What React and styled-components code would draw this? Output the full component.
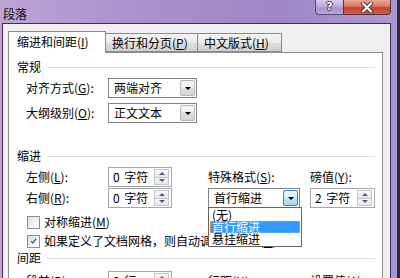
import React from 'react';
import styled, { createGlobalStyle } from 'styled-components';

const Global = createGlobalStyle`
  html, body { margin: 0; padding: 0; width: 400px; height: 278px; overflow: hidden; background: #2b2c3e; }
  body { font-family: "Noto Sans CJK SC", "Liberation Sans", sans-serif; font-size: 12px; color: #000; }
  #root { width: 400px; height: 278px; }
  u { text-decoration-thickness: 1px; text-underline-offset: 1px; }
`;

const Window = styled.div`
  width: 397px;
  height: 278px;
  display: flex;
  flex-direction: column;
  overflow: hidden;
  background: linear-gradient(90deg, #bea3d4 0%, #aa91cd 35%, #9f87c8 70%, #ab98d2 100%);
`;

const TitleBar = styled.div`
  height: 23px;
  display: flex;
  align-items: flex-start;
  padding-left: 3px;
  flex-shrink: 0;
`;

const Title = styled.div`
  margin-top: 6px;
  line-height: 16px;
  font-size: 12px;
  color: #111;
`;

const Caption = styled.div`
  margin-left: auto;
  margin-right: 6px;
  display: flex;
`;

const HelpButton = styled.div`
  width: 28px;
  height: 15px;
  box-sizing: border-box;
  border: 1px solid #5a4a78;
  border-top: none;
  border-right: none;
  border-bottom-left-radius: 4px;
  background: linear-gradient(180deg, #d8cbe9 0%, #baa6da 50%, #a992cd 55%, #b8a6dc 100%);
  display: flex;
  align-items: center;
  justify-content: center;
  color: #fff;
  font-family: "DejaVu Sans", sans-serif;
  font-weight: bold;
  font-size: 11px;
  line-height: 14px;
  text-shadow: 0 0 1px #3a3050, 1px 0 0 #4a3e62, -1px 0 0 #4a3e62, 0 1px 0 #4a3e62, 0 -1px 0 #4a3e62;
`;

const CloseButton = styled.div`
  width: 48px;
  height: 15px;
  box-sizing: border-box;
  border: 1px solid #5a3040;
  border-top: none;
  border-bottom-right-radius: 4px;
  background: linear-gradient(180deg, #e9a898 0%, #d77a64 45%, #c7432c 55%, #d45a3f 100%);
  display: flex;
  align-items: center;
  justify-content: center;
`;

const Client = styled.div`
  flex: 1;
  margin: 0 6px 0 2px;
  border: 1px solid #3b2f57;
  border-bottom: none;
  background: #f0f0f0;
  padding: 7px 7px 0 5px;
  display: flex;
  flex-direction: column;
  min-height: 0;
`;

const TabRow = styled.div`
  display: flex;
  align-items: flex-end;
  height: 21px;
  position: relative;
  z-index: 2;
`;

const Tab = styled.div`
  box-sizing: border-box;
  width: ${p => p.$w}px;
  height: ${p => (p.$active ? 22 : 19)}px;
  margin-bottom: ${p => (p.$active ? -1 : 0)}px;
  border: 1px solid #898c95;
  border-bottom: ${p => (p.$active ? 'none' : '1px solid #898c95')};
  border-left: ${p => (p.$first ? '1px solid #898c95' : 'none')};
  background: ${p => (p.$active ? '#fff' : 'linear-gradient(180deg, #f3f3f3 0%, #ebebeb 50%, #dedede 51%, #d0d0d0 100%)')};
  padding-left: ${p => (p.$active ? 8 : 6)}px;
  line-height: ${p => (p.$active ? 20 : 17)}px;
  white-space: nowrap;
`;

const Panel = styled.div`
  flex: 1;
  background: #fff;
  border: 1px solid #898c95;
  border-bottom: none;
  padding-left: 8px;
  display: flex;
  flex-direction: column;
  position: relative;
  z-index: 1;
`;

const SectionHeader = styled.div`
  display: flex;
  align-items: center;
  height: 14px;
  gap: 6px;
  margin-top: ${p => p.$mt}px;
  margin-right: 7px;
  line-height: 14px;
  &::after {
    content: "";
    flex: 1;
    height: 1px;
    background: #d5dfe5;
  }
`;

const FormRow = styled.div`
  display: flex;
  align-items: center;
  height: 20px;
  padding-left: 9px;
  margin-top: ${p => p.$mt}px;
`;

const Label = styled.div`
  width: ${p => p.$w || 82}px;
  white-space: nowrap;
  line-height: 16px;
`;

const SelectBox = styled.div`
  box-sizing: border-box;
  width: ${p => p.$w}px;
  height: 20px;
  border: 1px solid #7f8387;
  background: #fff;
  display: flex;
  align-items: stretch;
  padding: 1px;
  position: relative;
`;

const SelectText = styled.div`
  flex: 1;
  padding-left: 4px;
  line-height: 16px;
  white-space: nowrap;
`;

const SelectButton = styled.div`
  box-sizing: border-box;
  width: 15px;
  border: 1px solid ${p => (p.$hot ? '#3c7fb1' : '#b4b6ba')};
  border-radius: 2px;
  background: ${p =>
    p.$hot
      ? 'linear-gradient(180deg, #eaf6fd 0%, #d9f0fc 50%, #bee6fd 51%, #a7d9f5 100%)'
      : 'linear-gradient(180deg, #f7f7f7 0%, #ececec 50%, #dddddd 51%, #d6d6d6 100%)'};
  display: flex;
  align-items: center;
  justify-content: center;
  &::after {
    content: "";
    border-left: 3px solid transparent;
    border-right: 3px solid transparent;
    border-top: 3px solid #000;
    margin-top: 1px;
  }
`;

const SpinBox = styled.div`
  box-sizing: border-box;
  width: ${p => p.$w}px;
  height: 20px;
  border: 1px solid #a4a8ad;
  background: #fff;
  display: flex;
  align-items: stretch;
  padding: 1px;
`;

const SpinText = styled.div`
  flex: 1;
  padding-left: 3px;
  line-height: 16px;
  white-space: nowrap;
  word-spacing: 2px;
`;

const SpinButtons = styled.div`
  width: 15px;
  display: flex;
  flex-direction: column;
  gap: 0;
  margin-right: 1px;
`;

const SpinHalf = styled.div`
  flex: 1;
  box-sizing: border-box;
  border: 1px solid #c5c7ca;
  border-top: ${p => (p.$down ? 'none' : '1px solid #c5c7ca')};
  background: linear-gradient(180deg, #f9f9f9, #e6e6e6);
  display: flex;
  align-items: center;
  justify-content: center;
  &::after {
    content: "";
    border-left: 3px solid transparent;
    border-right: 3px solid transparent;
    ${p => (p.$down ? 'border-top: 3px solid #4d6185;' : 'border-bottom: 3px solid #4d6185;')}
  }
`;

const Grid = styled.div`
  display: grid;
  grid-template-columns: 82px 100px 102px 65px;
  grid-auto-rows: 20px;
  row-gap: ${p => p.$gap || 0}px;
  padding-left: 9px;
  margin-top: ${p => p.$mt}px;
  align-items: center;
`;

const DropWrap = styled.div`
  position: relative;
  width: 92px;
`;

const DropList = styled.div`
  position: absolute;
  left: 0;
  top: 19px;
  width: 94px;
  box-sizing: border-box;
  border: 1px solid #646464;
  background: #fff;
  padding: 1px 1px;
  z-index: 5;
`;

const DropItem = styled.div`
  box-sizing: border-box;
  height: 12px;
  line-height: 12px;
  padding-left: 2px;
  white-space: nowrap;
  color: ${p => (p.$sel ? '#fff' : '#000')};
  background: ${p => (p.$sel ? '#3399ff' : 'transparent')};
  outline: ${p => (p.$sel ? '1px dotted #f0a040' : 'none')};
  outline-offset: -1px;
`;

const CheckRow = styled.div`
  display: flex;
  align-items: center;
  gap: 4px;
  height: 16px;
  padding-left: 10px;
  margin-top: ${p => p.$mt}px;
  white-space: nowrap;
  line-height: 16px;
`;

const CheckBox = styled.div`
  box-sizing: border-box;
  width: 13px;
  height: 13px;
  flex-shrink: 0;
  border: 1px solid #8f8f8f;
  background: linear-gradient(135deg, #dcdcdc 0%, #f4f4f4 60%, #ffffff 100%);
  padding: 2px;
  display: flex;
  align-items: center;
  justify-content: center;
`;

const Check = () => (
  <svg width="10" height="10" viewBox="0 0 10 10">
    <path d="M1.5 5.2 L4 7.8 L8.8 1.8" fill="none" stroke="#4a5f97" strokeWidth="1.8" />
  </svg>
);

const CloseX = () => (
  <svg width="14" height="11" viewBox="0 0 14 11">
    <path d="M3 1.5 L11 9.5 M11 1.5 L3 9.5" stroke="#5a2a2a" strokeWidth="4" strokeLinecap="round" />
    <path d="M3 1.5 L11 9.5 M11 1.5 L3 9.5" stroke="#ffffff" strokeWidth="2.2" strokeLinecap="round" />
  </svg>
);

const Spin = ({ w, children }) => (
  <SpinBox $w={w}>
    <SpinText>{children}</SpinText>
    <SpinButtons>
      <SpinHalf />
      <SpinHalf $down />
    </SpinButtons>
  </SpinBox>
);

const Select = ({ w, hot, children }) => (
  <SelectBox $w={w}>
    <SelectText>{children}</SelectText>
    <SelectButton $hot={hot} />
  </SelectBox>
);

export default function App() {
  return (
    <>
      <Global />
      <Window>
        <TitleBar>
          <Title>段落</Title>
          <Caption>
            <HelpButton>?</HelpButton>
            <CloseButton><CloseX /></CloseButton>
          </Caption>
        </TitleBar>
        <Client>
          <TabRow>
            <Tab $active $first $w={98}>缩进和间距(<u>I</u>)</Tab>
            <Tab $w={92}>换行和分页(<u>P</u>)</Tab>
            <Tab $w={84}>中文版式(<u>H</u>)</Tab>
          </TabRow>
          <Panel>
            <SectionHeader $mt={7}>常规</SectionHeader>
            <FormRow $mt={4}>
              <Label>对齐方式(<u>G</u>):</Label>
              <Select w={89}>两端对齐</Select>
            </FormRow>
            <FormRow $mt={5}>
              <Label>大纲级别(<u>O</u>):</Label>
              <Select w={89}>正文文本</Select>
            </FormRow>

            <SectionHeader $mt={26}>缩进</SectionHeader>
            <Grid $mt={4} $gap={1}>
              <Label>左侧(<u>L</u>):</Label>
              <Spin w={64}>0 字符</Spin>
              <Label>特殊格式(<u>S</u>):</Label>
              <Label>磅值(<u>Y</u>):</Label>
              <Label>右侧(<u>R</u>):</Label>
              <Spin w={64}>0 字符</Spin>
              <DropWrap>
                <Select w={92} hot>首行缩进</Select>
                <DropList>
                  <DropItem>(无)</DropItem>
                  <DropItem $sel>首行缩进</DropItem>
                  <DropItem>悬挂缩进</DropItem>
                </DropList>
              </DropWrap>
              <Spin w={65}>2 字符</Spin>
            </Grid>
            <CheckRow $mt={6}>
              <CheckBox />
              <span>对称缩进(<u>M</u>)</span>
            </CheckRow>
            <CheckRow $mt={3}>
              <CheckBox><Check /></CheckBox>
              <span>如果定义了文档网格，则自动调整右缩进(<u>D</u>)</span>
            </CheckRow>

            <SectionHeader $mt={2}>间距</SectionHeader>
            <Grid $mt={6}>
              <Label>段前(<u>B</u>):</Label>
              <Spin w={64}>0 行</Spin>
              <Label>行距(<u>N</u>):</Label>
              <Label>设置值(<u>A</u>):</Label>
            </Grid>
          </Panel>
        </Client>
      </Window>
    </>
  );
}
